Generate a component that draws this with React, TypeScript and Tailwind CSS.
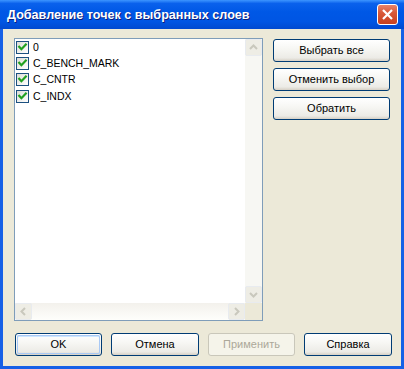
import React from "react";

const font = { fontFamily: '"Liberation Sans", Arial, sans-serif' };

function XPButton({ label, w, isDefault, disabled }: { label: string; w: string; isDefault?: boolean; disabled?: boolean }) {
  if (disabled) {
    return (
      <div className={`${w} h-[23px] rounded-[3px] border border-[#C9C7BA] bg-[#F5F4EA] flex items-center justify-center text-[11px] text-[#ACA899]`}>
        {label}
      </div>
    );
  }
  return (
    <div className={`${w} h-[23px] rounded-[3px] border border-[#003C74] bg-[linear-gradient(180deg,#FFFFFF_0%,#F7F7F4_40%,#ECEBE6_85%,#D6D0C5_100%)] flex p-[1px]`}>
      <div
        className={`flex-1 flex items-center justify-center rounded-[2px] text-[11px] text-black ${
          isDefault ? "shadow-[inset_0_0_0_1px_#A9C9F5,inset_0_1px_0_1px_#CEE7FF]" : ""
        }`}
      >
        {label}
      </div>
    </div>
  );
}

function CheckBox() {
  return (
    <div className="w-[13px] h-[13px] shrink-0 border border-[#1C5180] bg-[linear-gradient(135deg,#DCDCD7_0%,#F2F2EF_60%,#FFFFFF_100%)] flex items-center justify-center">
      <svg width="11" height="11" viewBox="0 0 11 11">
        <path d="M2.2 4.8 L4.4 7.2 L8.8 2.6" stroke="#21A121" strokeWidth="2.2" fill="none" strokeLinecap="square" />
      </svg>
    </div>
  );
}

function ArrowBtn({ dir }: { dir: "up" | "down" | "left" | "right" }) {
  const paths: Record<string, string> = {
    up: "M5 10 L8.5 6.5 L12 10",
    down: "M5 7 L8.5 10.5 L12 7",
    left: "M10 5 L6.5 8.5 L10 12",
    right: "M7 5 L10.5 8.5 L7 12",
  };
  return (
    <div className="w-[17px] h-[17px] rounded-[2px] border border-[#E8EBEF] bg-[#EEEDE5] flex items-center justify-center shrink-0">
      <svg width="17" height="17" viewBox="0 0 17 17" className="-m-[1px]">
        <path d={paths[dir]} stroke="#C9C8BD" strokeWidth="2" fill="none" />
      </svg>
    </div>
  );
}

export default function App() {
  const items = ["0", "C_BENCH_MARK", "C_CNTR", "C_INDX"];
  return (
    <div className="w-[404px] h-[369px] flex flex-col bg-[#1660E6]" style={font}>
      {/* title bar */}
      <div className="h-[29px] shrink-0 flex items-center pl-[7px] pr-[6px] bg-[linear-gradient(180deg,#3D95FF_0%,#0A61EC_12%,#0058E6_40%,#0055E3_75%,#0049D0_100%)]">
        <div className="flex-1 text-white font-bold text-[12.6px] [text-shadow:1px_1px_0_#0F1E7A] pt-[1px]">
          Добавление точек с выбранных слоев
        </div>
        <div className="w-[21px] h-[21px] rounded-[3px] border border-white bg-[linear-gradient(180deg,#E8836A_0%,#D95A3A_40%,#C8401E_100%)] flex items-center justify-center">
          <svg width="13" height="13" viewBox="0 0 13 13">
            <path d="M2 2 L11 11 M11 2 L2 11" stroke="white" strokeWidth="2.2" />
          </svg>
        </div>
      </div>
      {/* body */}
      <div className="flex-1 mx-[3px] mb-[3px] bg-[#ECE9D8] flex flex-col">
        <div className="flex pt-[9px] pl-[11px]">
          <div className="w-[249px] h-[283px] border border-[#7F9DB9] bg-white flex flex-col">
            <div className="flex h-[264px]">
              <div className="w-[229px] flex flex-col text-[10.5px] text-black">
                {items.map((t) => (
                  <div key={t} className="h-[16.3px] flex items-center pl-[1px] gap-[4px]">
                    <CheckBox />
                    <span className="leading-none">{t}</span>
                  </div>
                ))}
              </div>
              <div className="w-[17px] ml-auto bg-[#F7F7F3] flex flex-col justify-between">
                <ArrowBtn dir="up" />
                <ArrowBtn dir="down" />
              </div>
            </div>
            <div className="flex h-[17px]">
              <div className="flex-1 bg-[linear-gradient(180deg,#F3F1EC_0%,#FEFEFB_100%)] flex justify-between">
                <ArrowBtn dir="left" />
                <ArrowBtn dir="right" />
              </div>
              <div className="w-[17px] bg-[#ECE9D8]" />
            </div>
          </div>
          <div className="ml-[10px] pt-[1px] flex flex-col gap-[6px]">
            <XPButton label="Выбрать все" w="w-[117px]" />
            <XPButton label="Отменить выбор" w="w-[117px]" />
            <XPButton label="Обратить" w="w-[117px]" />
          </div>
        </div>
        <div className="flex pl-[12px] mt-[12px] gap-[9px]">
          <XPButton label="OK" w="w-[87px]" isDefault />
          <XPButton label="Отмена" w="w-[88px]" />
          <XPButton label="Применить" w="w-[87px]" disabled />
          <XPButton label="Справка" w="w-[88px]" />
        </div>
      </div>
    </div>
  );
}
